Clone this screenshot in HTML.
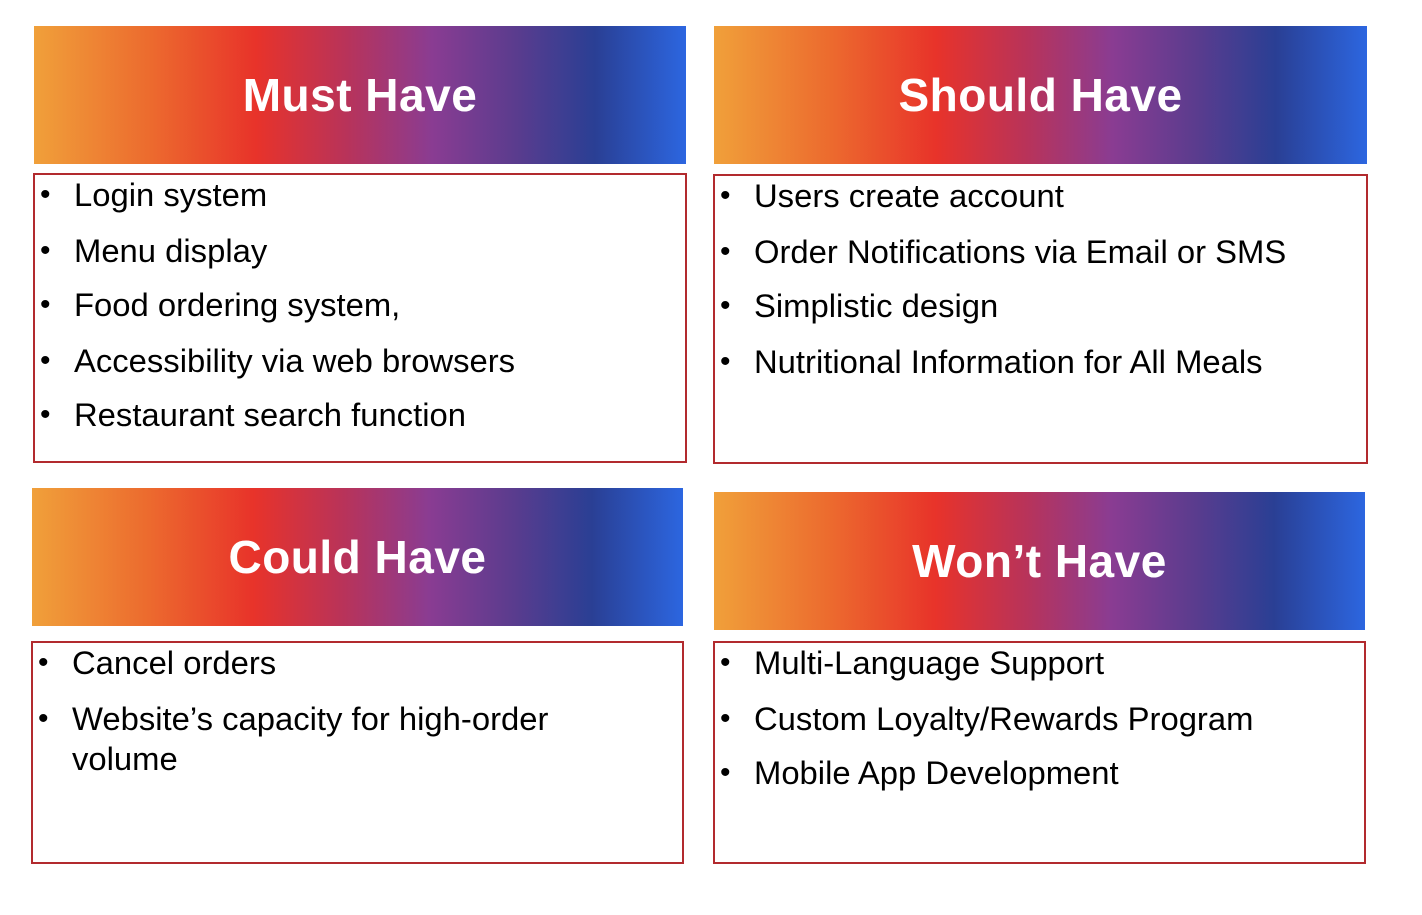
<!DOCTYPE html>
<html><head><meta charset="utf-8"><style>
body{margin:0;width:1422px;height:915px;background:#fff;position:relative;font-family:"Liberation Sans",sans-serif;overflow:hidden}
.h{position:absolute;height:138px;background:linear-gradient(90deg,#f0a03a 0%,#ec6a2e 18%,#e8332a 34%,#b8335a 48%,#8a3c92 61%,#5a3c8e 74%,#2a3f94 86%,#2c66e0 100%);color:#fff;font-weight:bold;font-size:46px;display:flex;align-items:center;justify-content:center;letter-spacing:0.5px}
.b{position:absolute;border:2px solid #b22a2e;box-sizing:border-box}
.t{position:absolute;font-size:32.8px;color:#000;white-space:nowrap;line-height:40px;transform:translateY(-50%)}
.d{position:absolute;font-size:30px;transform:translateY(-50%);line-height:40px}
</style></head><body>
<div class="h" style="left:34px;top:26px;width:652px">Must Have</div>
<div class="b" style="left:33px;top:173px;width:654px;height:290px"></div>
<div class="h" style="left:714px;top:26px;width:653px">Should Have</div>
<div class="b" style="left:713px;top:174px;width:655px;height:290px"></div>
<div class="h" style="left:32px;top:488px;width:651px">Could Have</div>
<div class="b" style="left:31px;top:641px;width:653px;height:223px"></div>
<div class="h" style="left:714px;top:492px;width:651px">Won’t Have</div>
<div class="b" style="left:713px;top:641px;width:653px;height:223px"></div>

<div class="d" style="left:40px;top:195px">•</div><div class="t" style="left:74px;top:195px">Login system</div>
<div class="d" style="left:40px;top:251px">•</div><div class="t" style="left:74px;top:251px">Menu display</div>
<div class="d" style="left:40px;top:305px">•</div><div class="t" style="left:74px;top:305px">Food ordering system,</div>
<div class="d" style="left:40px;top:361px">•</div><div class="t" style="left:74px;top:361px">Accessibility via web browsers</div>
<div class="d" style="left:40px;top:415px">•</div><div class="t" style="left:74px;top:415px">Restaurant search function</div>

<div class="d" style="left:720px;top:196px">•</div><div class="t" style="left:754px;top:196px">Users create account</div>
<div class="d" style="left:720px;top:252px">•</div><div class="t" style="left:754px;top:252px">Order Notifications via Email or SMS</div>
<div class="d" style="left:720px;top:306px">•</div><div class="t" style="left:754px;top:306px">Simplistic design</div>
<div class="d" style="left:720px;top:362px">•</div><div class="t" style="left:754px;top:362px">Nutritional Information for All Meals</div>

<div class="d" style="left:38px;top:663px">•</div><div class="t" style="left:72px;top:663px">Cancel orders</div>
<div class="d" style="left:38px;top:719px">•</div><div class="t" style="left:72px;top:719px">Website’s capacity for high-order</div>
<div class="t" style="left:72px;top:759px">volume</div>

<div class="d" style="left:720px;top:663px">•</div><div class="t" style="left:754px;top:663px">Multi-Language Support</div>
<div class="d" style="left:720px;top:719px">•</div><div class="t" style="left:754px;top:719px">Custom Loyalty/Rewards Program</div>
<div class="d" style="left:720px;top:773px">•</div><div class="t" style="left:754px;top:773px">Mobile App Development</div>
</body></html>
